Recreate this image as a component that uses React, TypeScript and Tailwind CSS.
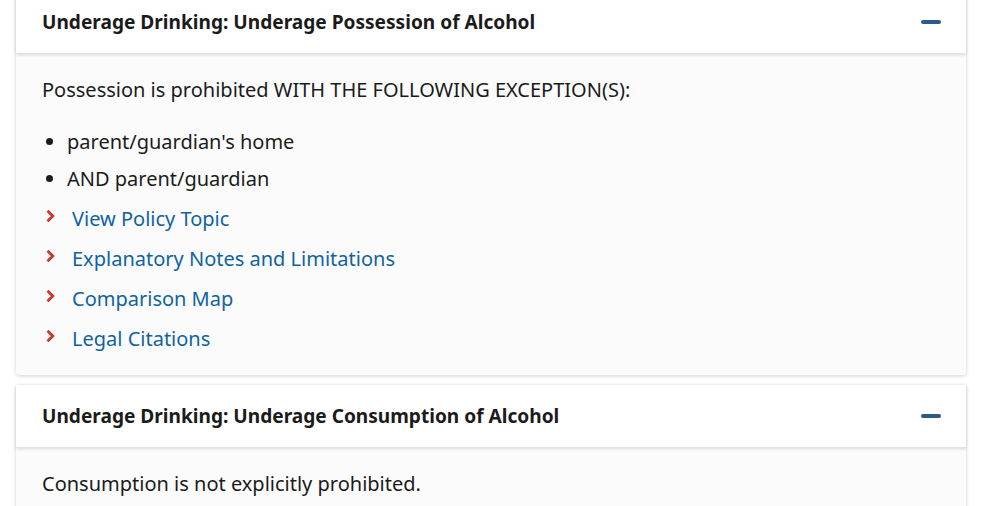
import { ReactNode } from 'react'

interface CardProps {
  title: string
  children: ReactNode
}

const Card = ({ title, children }: CardProps) => {
  return (
    <section className="bg-[#fbfbfc] rounded-[3px] shadow-[0_1px_4px_rgba(0,0,0,0.18)]">
      <div className="h-[63px] bg-white flex items-center justify-between pl-[26px] pr-[25px] shadow-[0_1px_3px_rgba(0,0,0,0.14)] border-b border-[#e4e4e4]">
        <h3 className="text-[19.1px] font-bold text-[#1b1b1b]">{title}</h3>
        <span className="block w-[20px] h-[4px] rounded-[2px] bg-[#2c5a8c]" />
      </div>
      {children}
    </section>
  )
}

const links = [
  'View Policy Topic',
  'Explanatory Notes and Limitations',
  'Comparison Map',
  'Legal Citations',
]

const App = () => {
  return (
    <div
      className="w-[1004px] h-[506px] overflow-hidden bg-white text-[#1b1b1b]"
      style={{ fontFamily: '"Noto Sans", "Open Sans", sans-serif' }}
    >
      <div className="ml-4 w-[950px] -mt-[9px] flex flex-col gap-[10px]">
        <Card title="Underage Drinking: Underage Possession of Alcohol">
          <div className="pl-[26px] pt-[23px] pb-[23px] text-[20px]">
            <p className="leading-[26px]">Possession is prohibited WITH THE FOLLOWING EXCEPTION(S):</p>
            <ul className="mt-[26px] pl-[25px] list-disc flex flex-col gap-[11px]">
              <li className="leading-[26px]">parent/guardian's home</li>
              <li className="leading-[26px]">AND parent/guardian</li>
            </ul>
            <ul className="mt-[14px] flex flex-col gap-[14px]">
              {links.map((link) => (
                <li key={link} className="flex items-center leading-[26px]">
                  <svg
                    className="w-[11px] h-[14px] ml-[3px] mr-[16px] -mt-[7px] text-[#c8372d]"
                    viewBox="0 0 11 14"
                    fill="none"
                    stroke="currentColor"
                    strokeWidth="2.8"
                  >
                    <path d="M2.5 1.8 L7.8 7 L2.5 12.2" />
                  </svg>
                  <a href="#" className="text-[#0f63a2]">
                    {link}
                  </a>
                </li>
              ))}
            </ul>
          </div>
        </Card>
        <Card title="Underage Drinking: Underage Consumption of Alcohol">
          <div className="pl-[26px] pt-[23px] pb-[24px] text-[20px]">
            <p className="leading-[26px]">Consumption is not explicitly prohibited.</p>
          </div>
        </Card>
      </div>
    </div>
  )
}

export default App
